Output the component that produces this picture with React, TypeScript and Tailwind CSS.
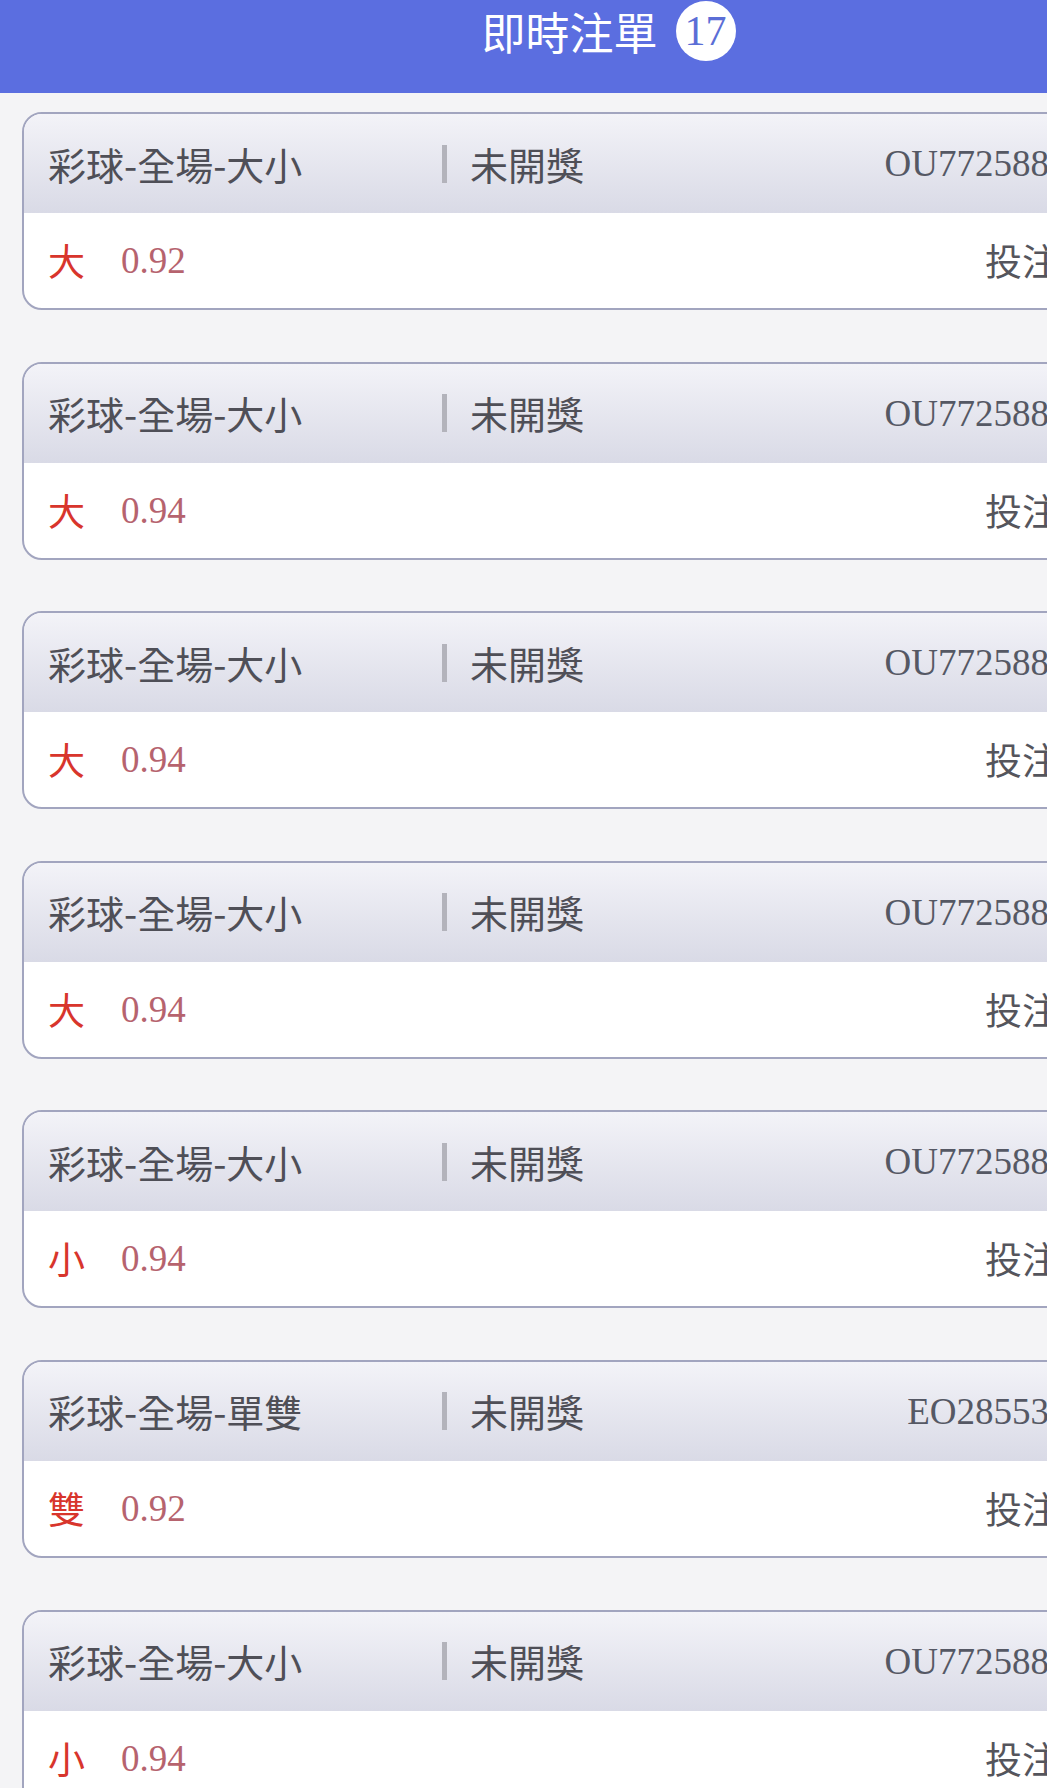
const bets = [
  { type: "彩球-全場-大小", pick: "大", odds: "0.92", id: "OU772588103415" },
  { type: "彩球-全場-大小", pick: "大", odds: "0.94", id: "OU772588103422" },
  { type: "彩球-全場-大小", pick: "大", odds: "0.94", id: "OU772588103437" },
  { type: "彩球-全場-大小", pick: "大", odds: "0.94", id: "OU772588103441" },
  { type: "彩球-全場-大小", pick: "小", odds: "0.94", id: "OU772588103456" },
  { type: "彩球-全場-單雙", pick: "雙", odds: "0.92", id: "EO28553170421" },
  { type: "彩球-全場-大小", pick: "小", odds: "0.94", id: "OU772588103468" },
];

const cjk = "font-['Noto_Sans_CJK_TC',sans-serif]";
const serif = "font-['Liberation_Serif',serif]";

function BetCard({ type, pick, odds, id }: (typeof bets)[number]) {
  return (
    <div className="w-[1164px] rounded-[20px] border-2 border-[#a2a5bf] overflow-hidden bg-white">
      <div className="h-[99px] flex items-center px-[24px] bg-gradient-to-b from-[#f3f3f8] to-[#d9dae6]">
        <span className={`w-[394px] text-[38px] leading-none text-[#4f4f57] ${cjk}`}>{type}</span>
        <span className="w-[5px] h-[38px] bg-[#b3b3bb]" />
        <span className={`ml-[23px] text-[38px] leading-none text-[#4f4f57] ${cjk}`}>未開獎</span>
        <span className={`ml-auto text-[37px] leading-none text-[#555864] ${serif}`}>{id}</span>
      </div>
      <div className="h-[95px] flex items-center px-[24px]">
        <span className={`text-[37px] leading-none text-[#d8352c] ${cjk}`}>{pick}</span>
        <span className={`ml-[36px] text-[37px] leading-none text-[#b6636e] ${serif}`}>{odds}</span>
        <span className={`ml-auto w-[175px] text-[37px] leading-none text-[#55555c] ${cjk}`}>投注金額</span>
      </div>
    </div>
  );
}

export default function App() {
  return (
    <div className="w-[1047px] min-h-[1788px] overflow-hidden bg-[#f4f4f6]">
      <div className="w-[1217px]">
        <div className="h-[93px] bg-[#5b6ee0] flex justify-center">
          <div className="h-[62px] flex items-center gap-[18px]">
            <span className={`text-[44px] leading-none text-white ${cjk}`}>即時注單</span>
            <span
              className={`w-[60px] h-[60px] rounded-full bg-white flex items-center justify-center text-[42px] leading-none text-[#5b6ed6] ${serif}`}
            >
              17
            </span>
          </div>
        </div>
        <div className="pt-[19px] pl-[22px] flex flex-col gap-[51.6px]">
          {bets.map((b, i) => (
            <BetCard key={i} {...b} />
          ))}
        </div>
      </div>
    </div>
  );
}
